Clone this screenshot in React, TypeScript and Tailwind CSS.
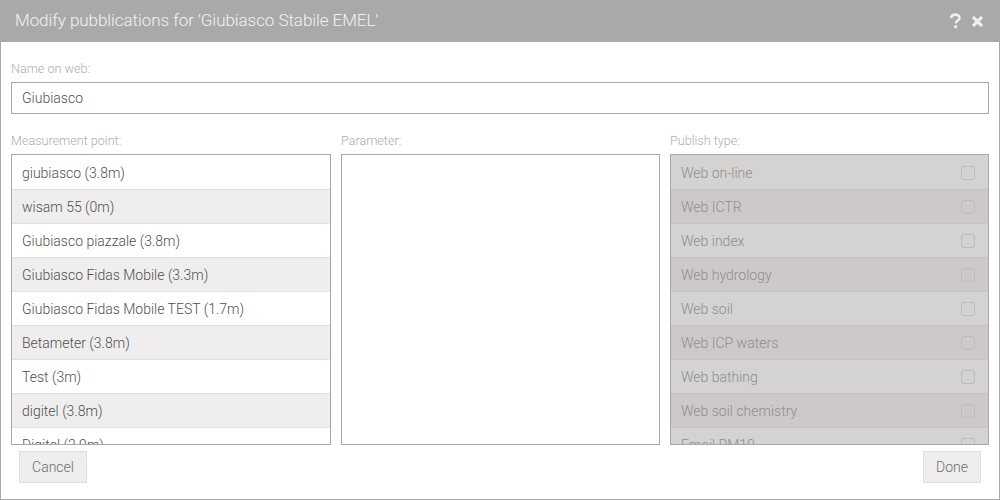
import React from "react";

const font = { fontFamily: "Roboto, 'Liberation Sans', sans-serif" };
const points = [
  "giubiasco (3.8m)",
  "wisam 55 (0m)",
  "Giubiasco piazzale (3.8m)",
  "Giubiasco Fidas Mobile (3.3m)",
  "Giubiasco Fidas Mobile TEST (1.7m)",
  "Betameter (3.8m)",
  "Test (3m)",
  "digitel (3.8m)",
  "Digitel (2.9m)",
];
const types = [
  "Web on-line",
  "Web ICTR",
  "Web index",
  "Web hydrology",
  "Web soil",
  "Web ICP waters",
  "Web bathing",
  "Web soil chemistry",
  "Email PM10",
];

function Label({ children }: { children: React.ReactNode }) {
  return <div className="h-[13px] text-[12.6px] leading-[14px] font-light text-[#adadad]">{children}</div>;
}

export default function App() {
  return (
    <div style={font} className="w-[1000px] h-[500px] flex flex-col bg-white border border-t-0 border-[#a9a9a9] overflow-hidden">
      <div className="h-[42px] shrink-0 -mx-px bg-[#a9a9a9] flex items-center justify-between pl-[15px] pr-[17px]">
        <span className="text-[17px] font-light text-[#f2f2f2] tracking-[-0.06px]">Modify pubblications for 'Giubiasco Stabile EMEL'</span>
        <div className="flex items-center gap-[11px] text-[#eeeeee]">
          <svg width="11" height="16" viewBox="0 0 11 16" fill="none">
            <path d="M1.3 5.2C1.3 3 3 1.6 5.3 1.6C7.7 1.6 9.5 3 9.5 5C9.5 7.5 5.8 7.6 5.8 10.4" stroke="currentColor" strokeWidth="2.6" />
            <rect x="4.2" y="12.3" width="3" height="3" rx="1" fill="currentColor" />
          </svg>
          <svg width="11" height="11" viewBox="0 0 11 11" fill="none">
            <path d="M1 1L10 10M10 1L1 10" stroke="currentColor" strokeWidth="3.2" />
          </svg>
        </div>
      </div>

      <div className="flex-1 flex flex-col px-[10px] pt-[20px] min-h-0">
        <Label>Name on web:</Label>
        <div className="mt-[7px] h-[32px] shrink-0 border border-[#a9a9a9] flex items-center px-[10px] text-[14px] font-light text-[#505050]">
          Giubiasco
        </div>

        <div className="mt-[20px] flex gap-[10px]">
          <div className="w-[320px]">
            <Label>Measurement point:</Label>
            <div className="mt-[7px] h-[291px] pt-[1px] border border-[#a9a9a9] overflow-hidden">
              {points.map((p, i) => (
                <div
                  key={p}
                  className={`h-[34px] flex items-center px-[10px] pt-[1px] text-[14px] font-light text-[#505050] border-b border-[#e2e0e0] ${i % 2 ? "bg-[#efedee]" : "bg-white"}`}
                >
                  {p}
                </div>
              ))}
            </div>
          </div>
          <div className="w-[319px]">
            <Label>Parameter:</Label>
            <div className="mt-[7px] h-[291px] border border-[#a9a9a9]" />
          </div>
          <div className="w-[319px]">
            <Label>Publish type:</Label>
            <div className="mt-[7px] h-[291px] border border-[#a9a9a9] overflow-hidden bg-[#d4d3d2]">
              <div className="pt-[1px]">
                {types.map((t, i) => (
                  <div
                    key={t}
                    className={`h-[34px] flex items-center justify-between pl-[10px] pr-[13px] pt-[1px] text-[14px] font-light text-[#8f8d8d] border-b border-[#c4c2c1] ${i % 2 ? "bg-[#cdc9c8]" : "bg-[#d4d3d2]"}`}
                  >
                    <span>{t}</span>
                    <span className="w-[14px] h-[14px] rounded-[3px] border border-[#bdbbba]" />
                  </div>
                ))}
              </div>
            </div>
          </div>
        </div>

        <div className="mt-[6px] flex justify-between px-[8px]">
          <button className="w-[68px] h-[32px] bg-[#efedee] border border-[#e0dfdf] text-[14px] font-light text-[#6e6e6e]">Cancel</button>
          <button className="w-[58px] h-[32px] bg-[#efedee] border border-[#e0dfdf] text-[14px] font-light text-[#6e6e6e]">Done</button>
        </div>
      </div>
    </div>
  );
}
